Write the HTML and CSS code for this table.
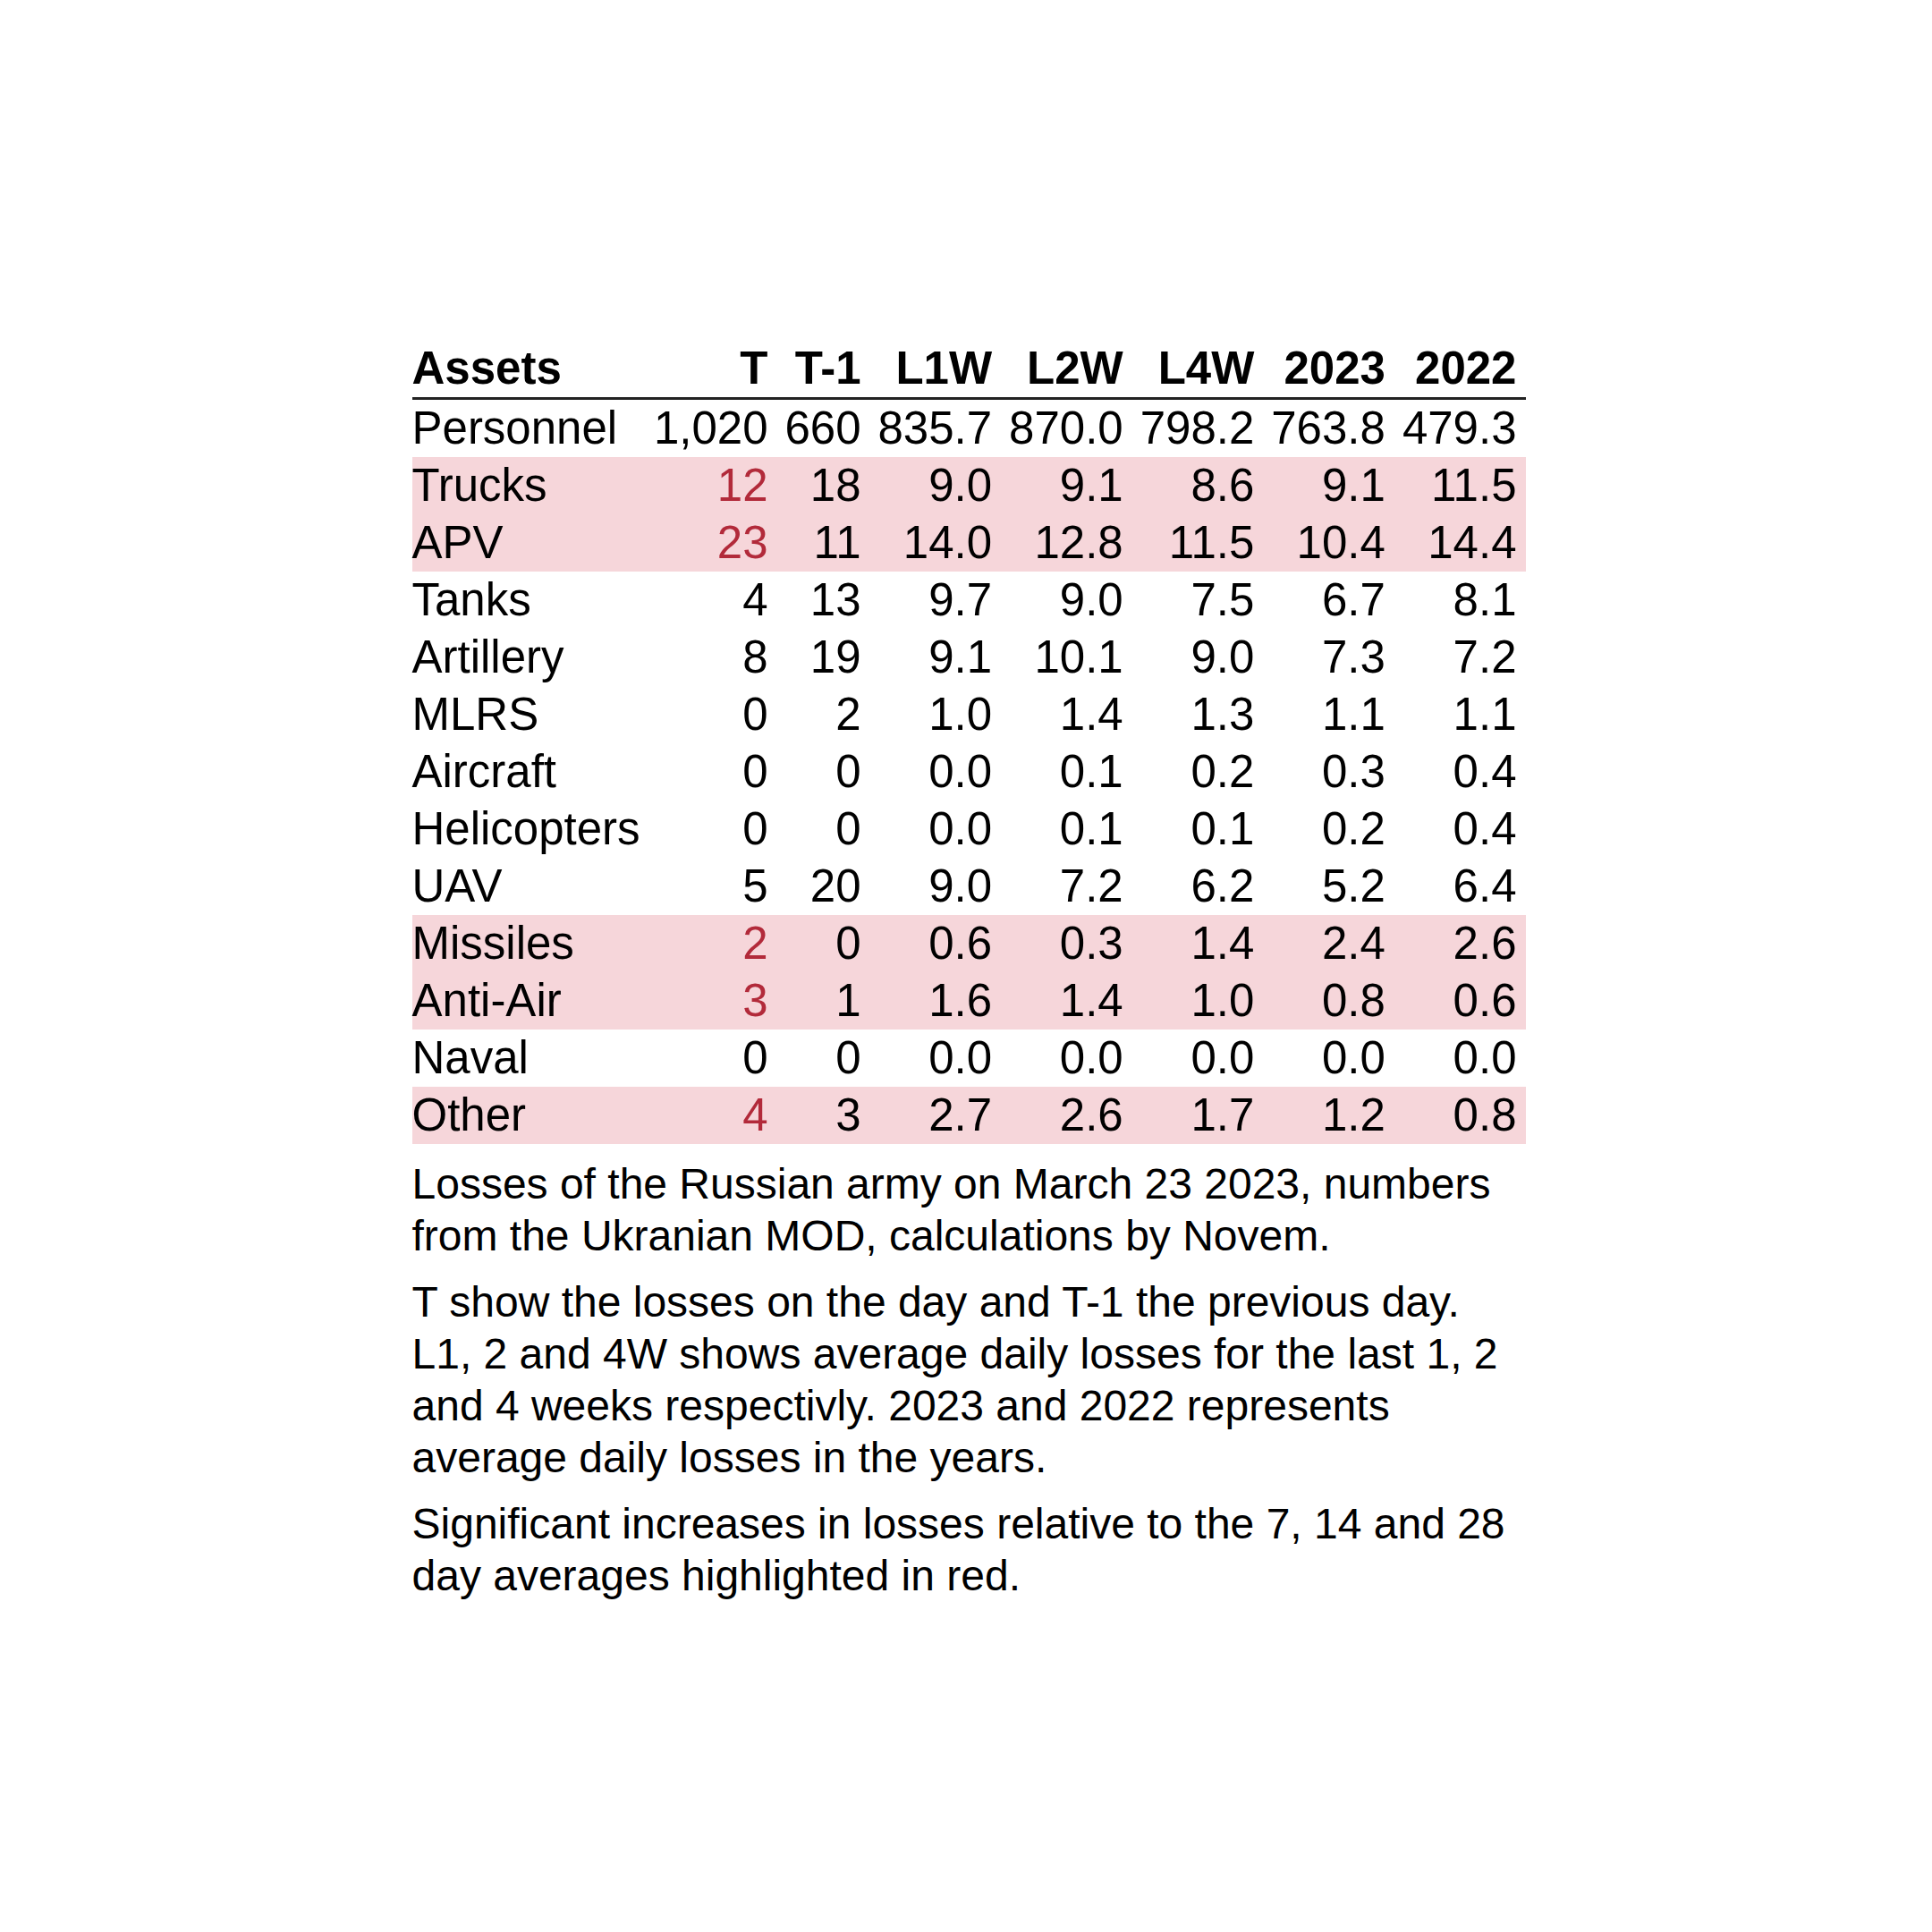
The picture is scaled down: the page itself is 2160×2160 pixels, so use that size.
FILE: index.html
```html
<!DOCTYPE html>
<html lang="en">
<head>
<meta charset="utf-8">
<title>Losses of the Russian army</title>
<link rel="stylesheet" href="styles.css">
</head>
<body>
<main class="page">
  <section class="report">
    <table class="losses">
      <colgroup>
        <col class="c-asset"><col class="c-t"><col class="c-t1"><col class="c-num"><col class="c-num"><col class="c-num"><col class="c-num"><col class="c-num">
      </colgroup>
      <thead>
        <tr><th class="name">Assets</th><th>T</th><th>T-1</th><th>L1W</th><th>L2W</th><th>L4W</th><th>2023</th><th>2022</th></tr>
      </thead>
      <tbody>
        <tr><td class="name">Personnel</td><td>1,020</td><td>660</td><td>835.7</td><td>870.0</td><td>798.2</td><td>763.8</td><td>479.3</td></tr>
        <tr class="hl"><td class="name">Trucks</td><td class="up">12</td><td>18</td><td>9.0</td><td>9.1</td><td>8.6</td><td>9.1</td><td>11.5</td></tr>
        <tr class="hl"><td class="name">APV</td><td class="up">23</td><td>11</td><td>14.0</td><td>12.8</td><td>11.5</td><td>10.4</td><td>14.4</td></tr>
        <tr><td class="name">Tanks</td><td>4</td><td>13</td><td>9.7</td><td>9.0</td><td>7.5</td><td>6.7</td><td>8.1</td></tr>
        <tr><td class="name">Artillery</td><td>8</td><td>19</td><td>9.1</td><td>10.1</td><td>9.0</td><td>7.3</td><td>7.2</td></tr>
        <tr><td class="name">MLRS</td><td>0</td><td>2</td><td>1.0</td><td>1.4</td><td>1.3</td><td>1.1</td><td>1.1</td></tr>
        <tr><td class="name">Aircraft</td><td>0</td><td>0</td><td>0.0</td><td>0.1</td><td>0.2</td><td>0.3</td><td>0.4</td></tr>
        <tr><td class="name">Helicopters</td><td>0</td><td>0</td><td>0.0</td><td>0.1</td><td>0.1</td><td>0.2</td><td>0.4</td></tr>
        <tr><td class="name">UAV</td><td>5</td><td>20</td><td>9.0</td><td>7.2</td><td>6.2</td><td>5.2</td><td>6.4</td></tr>
        <tr class="hl"><td class="name">Missiles</td><td class="up">2</td><td>0</td><td>0.6</td><td>0.3</td><td>1.4</td><td>2.4</td><td>2.6</td></tr>
        <tr class="hl"><td class="name">Anti-Air</td><td class="up">3</td><td>1</td><td>1.6</td><td>1.4</td><td>1.0</td><td>0.8</td><td>0.6</td></tr>
        <tr><td class="name">Naval</td><td>0</td><td>0</td><td>0.0</td><td>0.0</td><td>0.0</td><td>0.0</td><td>0.0</td></tr>
        <tr class="hl"><td class="name">Other</td><td class="up">4</td><td>3</td><td>2.7</td><td>2.6</td><td>1.7</td><td>1.2</td><td>0.8</td></tr>
      </tbody>
    </table>
    <div class="notes">
      <p>Losses of the Russian army on March 23 2023, numbers from the Ukranian MOD, calculations by Novem.</p>
      <p>T show the losses on the day and T-1 the previous day. L1, 2 and 4W shows average daily losses for the last 1, 2 and 4 weeks respectivly. 2023 and 2022 represents average daily losses in the years.</p>
      <p>Significant increases in losses relative to the 7, 14 and 28 day averages highlighted in red.</p>
    </div>
  </section>
</main>
</body>
</html>
```

FILE: styles.css
```css
html, body {
  margin: 0;
  padding: 0;
  background: #ffffff;
}

body {
  font-family: "Liberation Sans", Arial, sans-serif;
  color: #000000;
}

.page {
  width: 2160px;
  height: 2160px;
  display: flex;
  align-items: center;
  justify-content: center;
}

.report {
  width: 1245px;
  margin-left: 6px;
  margin-top: 10px;
}

.losses {
  width: 1245px;
  border-collapse: collapse;
  table-layout: fixed;
  font-size: 51px;
  line-height: 64px;
}

.c-asset { width: 261px; }
.c-t { width: 147px; }
.c-t1 { width: 104px; }
.c-num { width: 146.6px; }

.losses th,
.losses td {
  padding: 0 10px 0 0;
  text-align: right;
  white-space: nowrap;
  font-weight: normal;
}

.losses th {
  font-weight: bold;
}

.losses thead tr {
  border-bottom: 3px solid #222222;
}

.losses th.name,
.losses td.name {
  text-align: left;
  padding: 0;
}

.losses tr.hl {
  background: #f6d6da;
}

.losses td.up {
  color: #b22a3a;
}

.notes {
  font-size: 48px;
  line-height: 58px;
  padding-top: 16px;
}

.notes p {
  margin: 0 0 16px 0;
}

.notes p:last-child {
  margin-bottom: 0;
}
```
